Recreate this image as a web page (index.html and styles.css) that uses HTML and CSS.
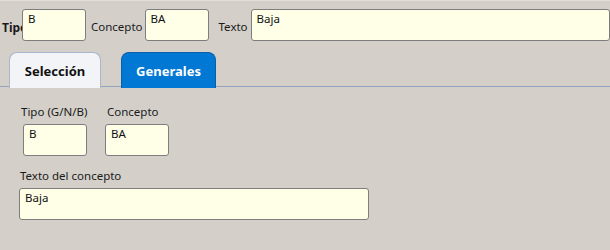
FILE: index.html
```html
<!DOCTYPE html>
<html lang="es">
<head>
<meta charset="utf-8">
<link rel="stylesheet" href="styles.css">
</head>
<body>
<div class="topline"></div>
<div class="toprow">
  <span class="lbl-bold">Tipo</span>
  <div class="field w64">B</div>
  <span class="lbl lbl-concepto">Concepto</span>
  <div class="field w64">BA</div>
  <span class="lbl lbl-texto">Texto</span>
  <div class="field wide">Baja</div>
</div>
<div class="tabs">
  <div class="tab tab-sel">Selección</div>
  <div class="tab tab-gen">Generales</div>
</div>
<div class="panel">
  <div class="row1">
    <div class="group g1">
      <span class="lbl">Tipo (G/N/B)</span>
      <div class="field w64">B</div>
    </div>
    <div class="group g2">
      <span class="lbl">Concepto</span>
      <div class="field w64">BA</div>
    </div>
  </div>
  <div class="group g3">
    <span class="lbl">Texto del concepto</span>
    <div class="field w350">Baja</div>
  </div>
</div>
</body>
</html>
```

FILE: styles.css
```css
html, body {
  margin: 0;
  padding: 0;
  background: #d4d0c9;
  font-family: "Noto Sans", "Open Sans", sans-serif;
  font-size: 11.5px;
  color: #1a1a1a;
  overflow: hidden;
}
.topline {
  height: 1px;
  background: #e2e0dc;
}
.toprow {
  display: flex;
  align-items: center;
  padding: 8px 0 0 2px;
  height: 32px;
}
.lbl-bold {
  font-weight: bold;
  width: 20px;
  white-space: nowrap;
  overflow: visible;
  padding-top: 4px;
  font-size: 12px;
}
.lbl {
  white-space: nowrap;
  line-height: 16px;
}
.toprow .lbl { padding-top: 4px; }
.lbl-concepto { margin: 0 2px 0 5px; }
.lbl-texto { margin: 0 3px 0 10px; }
.field {
  position: relative;
  box-sizing: border-box;
  height: 32px;
  background: #ffffe8;
  border: 1px solid #7d7d7d;
  border-radius: 3px;
  padding: 1px 5px;
  line-height: 16px;
  font-size: 11.5px;
  color: #111;
}
.w64 { width: 64px; }
.wide { flex: 1; }
.w350 { width: 350px; }
.tabs {
  display: flex;
  margin-top: 11px;
  padding-left: 9px;
  gap: 20px;
  position: relative;
  border-bottom: 1px solid #93a4c0;
  box-sizing: border-box;
  height: 35px;
}
.tab {
  box-sizing: border-box;
  height: 36px;
  display: flex;
  align-items: center;
  justify-content: center;
  font-weight: bold;
  font-size: 13px;
  border-radius: 8px 8px 0 0;
  position: relative;
  z-index: 1;
}
.tab-sel {
  width: 92px;
  background: #f2f4f8;
  border: 1px solid #a9b6cb;
  border-bottom: none;
  color: #111;
}
.tab-gen {
  width: 95px;
  background: #0078d4;
  border: 1px solid #0b5fa8;
  border-bottom: none;
  color: #fff;
}
.panel {
  padding: 17px 0 0 19px;
}
.row1 {
  display: flex;
}
.group {
  display: flex;
  flex-direction: column;
}
.g1, .g2 { width: 64px; }
.g1 { margin-left: 4px; }
.g1 .lbl { margin-left: -2px; margin-bottom: 4px; }
.g2 { margin-left: 18px; }
.g2 .lbl { margin-left: 2px; margin-bottom: 4px; }
.g3 { margin-top: 12px; }
.g3 .lbl { margin-left: 1px; margin-bottom: 4px; }
```
